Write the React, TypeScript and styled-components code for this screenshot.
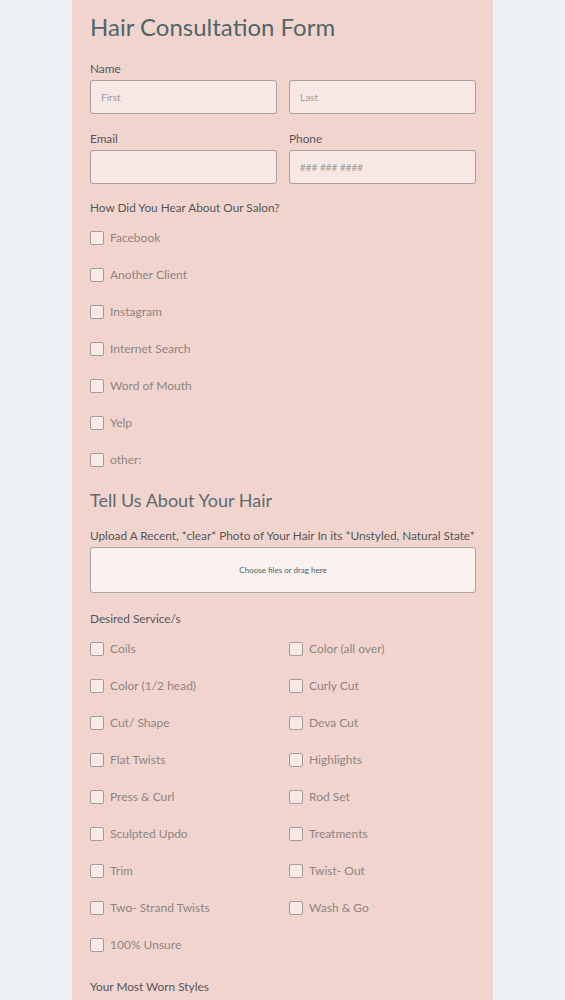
import styled, { createGlobalStyle } from 'styled-components'

const heardFrom = [
  'Facebook',
  'Another Client',
  'Instagram',
  'Internet Search',
  'Word of Mouth',
  'Yelp',
  'other:',
]

const services = [
  'Coils',
  'Color (all over)',
  'Color (1/2 head)',
  'Curly Cut',
  'Cut/ Shape',
  'Deva Cut',
  'Flat Twists',
  'Highlights',
  'Press & Curl',
  'Rod Set',
  'Sculpted Updo',
  'Treatments',
  'Trim',
  'Twist- Out',
  'Two- Strand Twists',
  'Wash & Go',
  '100% Unsure',
]

export default function App() {
  return (
    <>
      <GlobalStyle />
      <Page>
        <Card>
          <Title>Hair Consultation Form</Title>

          <Group $top={19}>
            <Label>Name</Label>
            <Pair>
              <Input placeholder='First' />
              <Input placeholder='Last' />
            </Pair>
          </Group>

          <Pair $top={17}>
            <Group>
              <Label>Email</Label>
              <Input />
            </Group>
            <Group>
              <Label>Phone</Label>
              <Input placeholder='### ### ####' />
            </Group>
          </Pair>

          <Group $top={16}>
            <Label>How Did You Hear About Our Salon?</Label>
            <Options>
              {heardFrom.map((item) => (
                <Option key={item}>
                  <Box type='checkbox' />
                  {item}
                </Option>
              ))}
            </Options>
          </Group>

          <Subtitle>Tell Us About Your Hair</Subtitle>

          <Group $top={16}>
            <Label>Upload A Recent, *clear* Photo of Your Hair In its *Unstyled, Natural State*</Label>
            <Dropzone>Choose files or drag here</Dropzone>
          </Group>

          <Group $top={18}>
            <Label>Desired Service/s</Label>
            <Options $cols={2}>
              {services.map((item) => (
                <Option key={item}>
                  <Box type='checkbox' />
                  {item}
                </Option>
              ))}
            </Options>
          </Group>

          <Group $top={16}>
            <Label>Your Most Worn Styles</Label>
          </Group>
        </Card>
      </Page>
    </>
  )
}

const GlobalStyle = createGlobalStyle`
  body {
    margin: 0;
    background: #edf1f3;
    font-family: 'Lato', 'Noto Sans', sans-serif;
  }
`

const Page = styled.main`
  width: 565px;
  height: 1000px;
  overflow: hidden;
`

const Card = styled.form`
  width: 421px;
  min-height: 1000px;
  margin-left: 72px;
  padding: 12px 17px 40px 18px;
  box-sizing: border-box;
  background: #f2d4ce;
`

const Title = styled.h1`
  margin: 0;
  font-size: 24px;
  line-height: 30px;
  font-weight: 400;
  color: #4f6669;
`

const Subtitle = styled.h2`
  margin: 10px 0 0;
  font-size: 18px;
  line-height: 24px;
  font-weight: 400;
  color: #5d6a6c;
`

const Group = styled.div<{ $top?: number }>`
  margin-top: ${(p) => p.$top ?? 0}px;
  display: flex;
  flex-direction: column;
`

const Pair = styled.div<{ $top?: number }>`
  margin-top: ${(p) => p.$top ?? 0}px;
  display: grid;
  grid-template-columns: 1fr 1fr;
  column-gap: 12px;
`

const Label = styled.label`
  margin-bottom: 3px;
  font-size: 11.8px;
  line-height: 16px;
  color: #51585a;
  white-space: nowrap;
`

const Input = styled.input`
  height: 34px;
  box-sizing: border-box;
  padding: 0 10px;
  border: 1px solid #a99f9d;
  border-radius: 3px;
  background: #f7e8e5;
  font-family: inherit;
  font-size: 10px;
  color: #555;
  &::placeholder {
    color: #a29896;
  }
`

const Options = styled.div<{ $cols?: number }>`
  display: grid;
  grid-template-columns: repeat(${(p) => p.$cols ?? 1}, 1fr);
  column-gap: 12px;
`

const Option = styled.label`
  height: 37px;
  display: flex;
  align-items: center;
  gap: 6px;
  font-size: 12px;
  color: #8d8582;
`

const Box = styled.input`
  appearance: none;
  width: 14px;
  height: 14px;
  margin: 0;
  box-sizing: border-box;
  border: 1px solid #a59b99;
  border-radius: 2px;
  background: #f8eae7;
`

const Dropzone = styled.div`
  height: 46px;
  box-sizing: border-box;
  display: flex;
  align-items: center;
  justify-content: center;
  border: 1px solid #aaa3a1;
  border-radius: 3px;
  background: #fbf1ef;
  font-size: 8px;
  color: #4f5f62;
`
